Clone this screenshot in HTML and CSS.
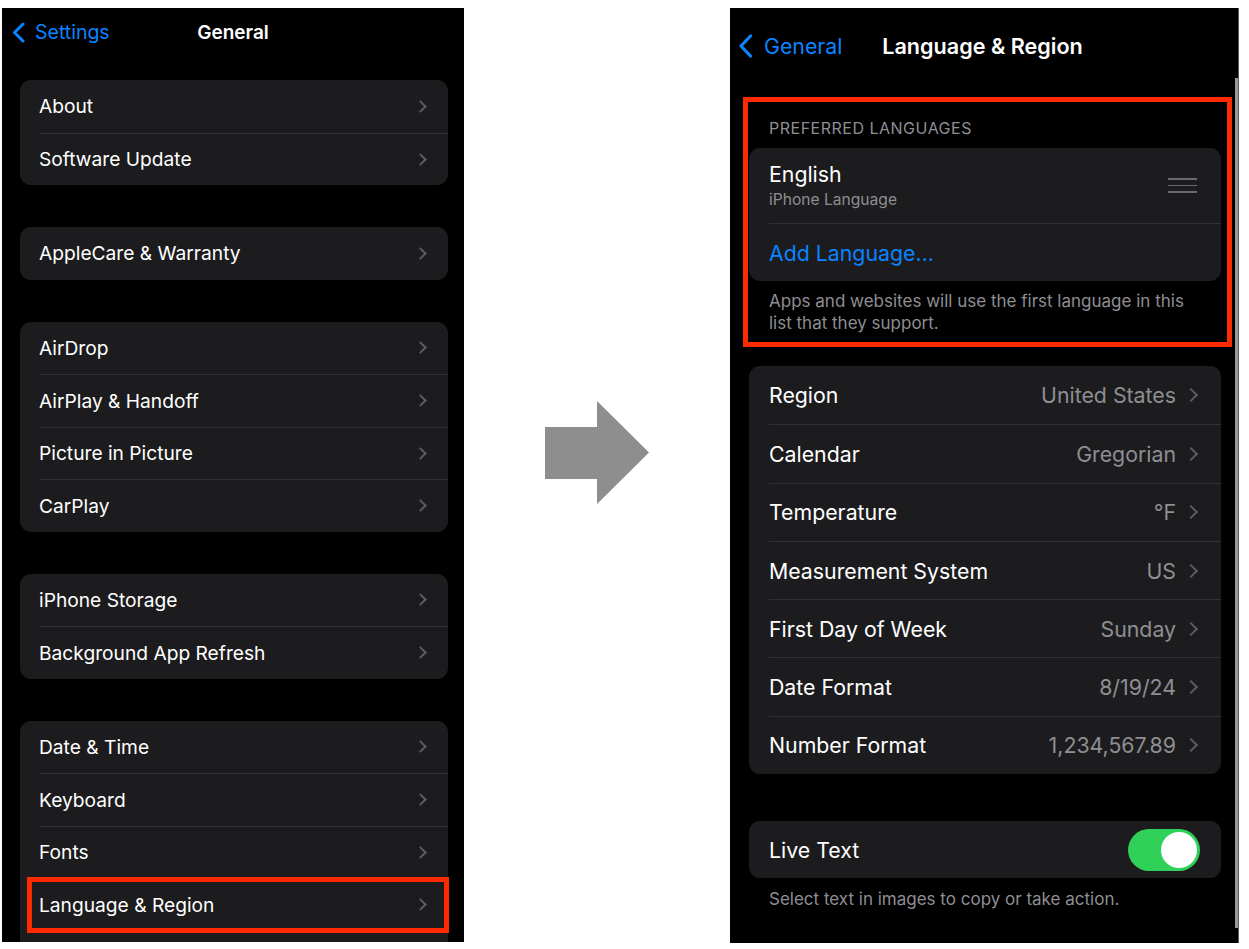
FILE: index.html
```html
<!DOCTYPE html>
<html>
<head>
    <meta charset="UTF-8">
    <title>General → Language &amp; Region</title>
    <link rel="stylesheet" href="styles.css">
</head>
<body>
    <div class="stage">

        <!-- left screen: General -->
        <div class="phone phone-left">
            <div class="nav">
                <div class="back">
                    <svg width="13" height="21" viewBox="0 0 13 21"><polyline points="11,2 2.5,10.5 11,19" fill="none" stroke="#0a84ff" stroke-width="3" stroke-linecap="round" stroke-linejoin="round"/></svg>
                    <span>Settings</span>
                </div>
                <div class="nav-title">General</div>
            </div>

            <div class="groups">
                <div class="card">
                    <div class="row"><span class="label">About</span><span class="chev"></span></div>
                    <div class="row"><span class="label">Software Update</span><span class="chev"></span></div>
                </div>
                <div class="card">
                    <div class="row"><span class="label">AppleCare &amp; Warranty</span><span class="chev"></span></div>
                </div>
                <div class="card">
                    <div class="row"><span class="label">AirDrop</span><span class="chev"></span></div>
                    <div class="row"><span class="label">AirPlay &amp; Handoff</span><span class="chev"></span></div>
                    <div class="row"><span class="label">Picture in Picture</span><span class="chev"></span></div>
                    <div class="row"><span class="label">CarPlay</span><span class="chev"></span></div>
                </div>
                <div class="card">
                    <div class="row"><span class="label">iPhone Storage</span><span class="chev"></span></div>
                    <div class="row"><span class="label">Background App Refresh</span><span class="chev"></span></div>
                </div>
                <div class="card card-cut">
                    <div class="row"><span class="label">Date &amp; Time</span><span class="chev"></span></div>
                    <div class="row"><span class="label">Keyboard</span><span class="chev"></span></div>
                    <div class="row"><span class="label">Fonts</span><span class="chev"></span></div>
                    <div class="row row-marked"><span class="label">Language &amp; Region</span><span class="chev"></span></div>
                </div>
            </div>
        </div>

        <!-- arrow between the screens -->
        <div class="arrow-col">
            <svg width="104" height="103" viewBox="0 0 104 103"><polygon points="0,26 52,26 52,0 104,51.5 52,103 52,78 0,78" fill="#8e8e8e"/></svg>
        </div>

        <!-- right screen: Language & Region -->
        <div class="phone phone-right">
            <div class="screen">
                <div class="nav nav-lg">
                    <div class="back">
                        <svg width="15" height="24" viewBox="0 0 15 24"><polyline points="12.5,2 3,12 12.5,22" fill="none" stroke="#0a84ff" stroke-width="3.2" stroke-linecap="round" stroke-linejoin="round"/></svg>
                        <span>General</span>
                    </div>
                    <div class="nav-title">Language &amp; Region</div>
                </div>

                <div class="content">
                    <div class="marked">
                        <div class="section-head">PREFERRED LANGUAGES</div>
                        <div class="card">
                            <div class="row-lang">
                                <div class="lang-text">
                                    <div class="lang-name">English</div>
                                    <div class="lang-sub">iPhone Language</div>
                                </div>
                                <div class="handle"><i></i><i></i><i></i></div>
                            </div>
                            <div class="row row-lg"><span class="link">Add Language…</span></div>
                        </div>
                        <div class="section-foot">Apps and websites will use the first language in this list that they support.</div>
                    </div>

                    <div class="card card-region">
                        <div class="row row-lg"><span class="label">Region</span><span class="value">United States</span><span class="chev"></span></div>
                        <div class="row row-lg"><span class="label">Calendar</span><span class="value">Gregorian</span><span class="chev"></span></div>
                        <div class="row row-lg"><span class="label">Temperature</span><span class="value">°F</span><span class="chev"></span></div>
                        <div class="row row-lg"><span class="label">Measurement System</span><span class="value">US</span><span class="chev"></span></div>
                        <div class="row row-lg"><span class="label">First Day of Week</span><span class="value">Sunday</span><span class="chev"></span></div>
                        <div class="row row-lg"><span class="label">Date Format</span><span class="value">8/19/24</span><span class="chev"></span></div>
                        <div class="row row-lg"><span class="label">Number Format</span><span class="value">1,234,567.89</span><span class="chev"></span></div>
                    </div>

                    <div class="card card-live">
                        <div class="row row-lg row-toggle"><span class="label">Live Text</span><span class="toggle"><span class="knob"></span></span></div>
                    </div>
                    <div class="section-foot foot-live">Select text in images to copy or take action.</div>
                </div>
            </div>
            <div class="scroll-track"><div class="scroll-thumb"></div></div>
        </div>

    </div>
</body>
</html>
```

FILE: styles.css
```css
body {
    margin: 0;
    padding: 8px 0 0 2px;
    background: #ffffff;
    font-family: 'Inter', 'Noto Sans', sans-serif;
    color: #ffffff;
}

.stage {
    display: flex;
    align-items: flex-start;
}

.phone {
    background: #000000;
    overflow: hidden;
}

.phone-left {
    width: 462px;
    height: 934px;
}

.phone-right {
    width: 509px;
    height: 935px;
    display: flex;
}

/* nav bar */

.nav {
    display: grid;
    grid-template-columns: 1fr auto 1fr;
    align-items: center;
    height: 48px;
}

.back {
    display: flex;
    align-items: center;
    gap: 10px;
    padding-left: 10px;
    color: #0a84ff;
    font-size: 19.5px;
}

.nav-title {
    font-size: 19px;
    font-weight: 600;
}

.nav-lg {
    height: 76px;
}

.nav-lg .back {
    padding-left: 8px;
    gap: 11px;
    font-size: 21.3px;
}

.nav-lg .nav-title {
    font-size: 21.6px;
}

/* grouped lists */

.groups {
    display: flex;
    flex-direction: column;
    gap: 42px;
    padding: 24px 16px 0 18px;
}

.card {
    background: #1c1c1e;
    border-radius: 11px;
}

.card-cut {
    padding-bottom: 30px;
    border-radius: 11px 11px 0 0;
}

.row {
    position: relative;
    display: flex;
    align-items: center;
    height: 52.5px;
    margin-left: 19px;
    padding-right: 20px;
    border-top: 1px solid #323235;
    box-sizing: border-box;
    font-size: 19.2px;
}

.card > .row:first-child {
    border-top: none;
}

.label {
    flex: 1;
}

.chev {
    width: 7px;
    height: 7px;
    border-top: 2.2px solid #5c5c60;
    border-right: 2.2px solid #5c5c60;
    transform: rotate(45deg);
    margin-right: 3px;
}

.row-marked::after {
    content: "";
    position: absolute;
    left: -12px;
    right: -1px;
    top: -2px;
    bottom: -2px;
    border: 5px solid #ff2a00;
}

/* arrow */

.arrow-col {
    width: 266px;
    display: flex;
    justify-content: center;
    padding-top: 393px;
}

/* right screen */

.screen {
    width: 505px;
}

.content {
    display: flex;
    flex-direction: column;
    padding: 0 14px 0 19px;
}

.marked {
    margin: 13px -11px 0 -6px;
    padding: 16px 6px 8px 1px;
    border: 5px solid #ff2a00;
}

.section-head {
    padding-left: 20px;
    margin-bottom: 10px;
    font-size: 16px;
    line-height: 20px;
    color: #8e8e93;
    letter-spacing: 0.5px;
}

.section-foot {
    margin-top: 9px;
    padding-left: 20px;
    padding-right: 30px;
    font-size: 17px;
    line-height: 22px;
    color: #8e8e93;
}

.row-lang {
    display: flex;
    align-items: center;
    height: 75px;
    padding: 0 24px 0 20px;
}

.lang-text {
    flex: 1;
}

.lang-name {
    font-size: 21.3px;
    line-height: 24px;
}

.lang-sub {
    margin-top: 4px;
    font-size: 15.6px;
    line-height: 20px;
    color: #8e8e93;
}

.handle {
    display: flex;
    flex-direction: column;
    gap: 5px;
    width: 29px;
}

.handle i {
    height: 1.6px;
    background: #6a6a6e;
}

.row-lg {
    height: 58.3px;
    margin-left: 20px;
    padding-right: 22px;
    font-size: 21.3px;
}

.row-lang + .row-lg {
    height: 58px;
}

.link {
    color: #0a84ff;
}

.value {
    color: #8e8e93;
    margin-right: 10px;
}

.row-lg .chev {
    width: 8px;
    height: 8px;
    border-width: 2.4px;
}

.card-region {
    margin-top: 19px;
}

.card-live {
    margin-top: 47px;
}

.row-toggle {
    height: 57px;
    padding-right: 21px;
}

.toggle {
    display: flex;
    justify-content: flex-end;
    align-items: center;
    width: 72px;
    height: 42px;
    padding: 3px;
    box-sizing: border-box;
    border-radius: 21px;
    background: #30d158;
}

.knob {
    width: 36px;
    height: 36px;
    border-radius: 50%;
    background: #ffffff;
}

.foot-live {
    margin-top: 10px;
}

.scroll-track {
    width: 4px;
    border-right: 1px solid #5a5a5a;
    box-sizing: border-box;
    padding-top: 70px;
}

.scroll-thumb {
    width: 3px;
    height: 850px;
    background: #9a9a9a;
}
```
